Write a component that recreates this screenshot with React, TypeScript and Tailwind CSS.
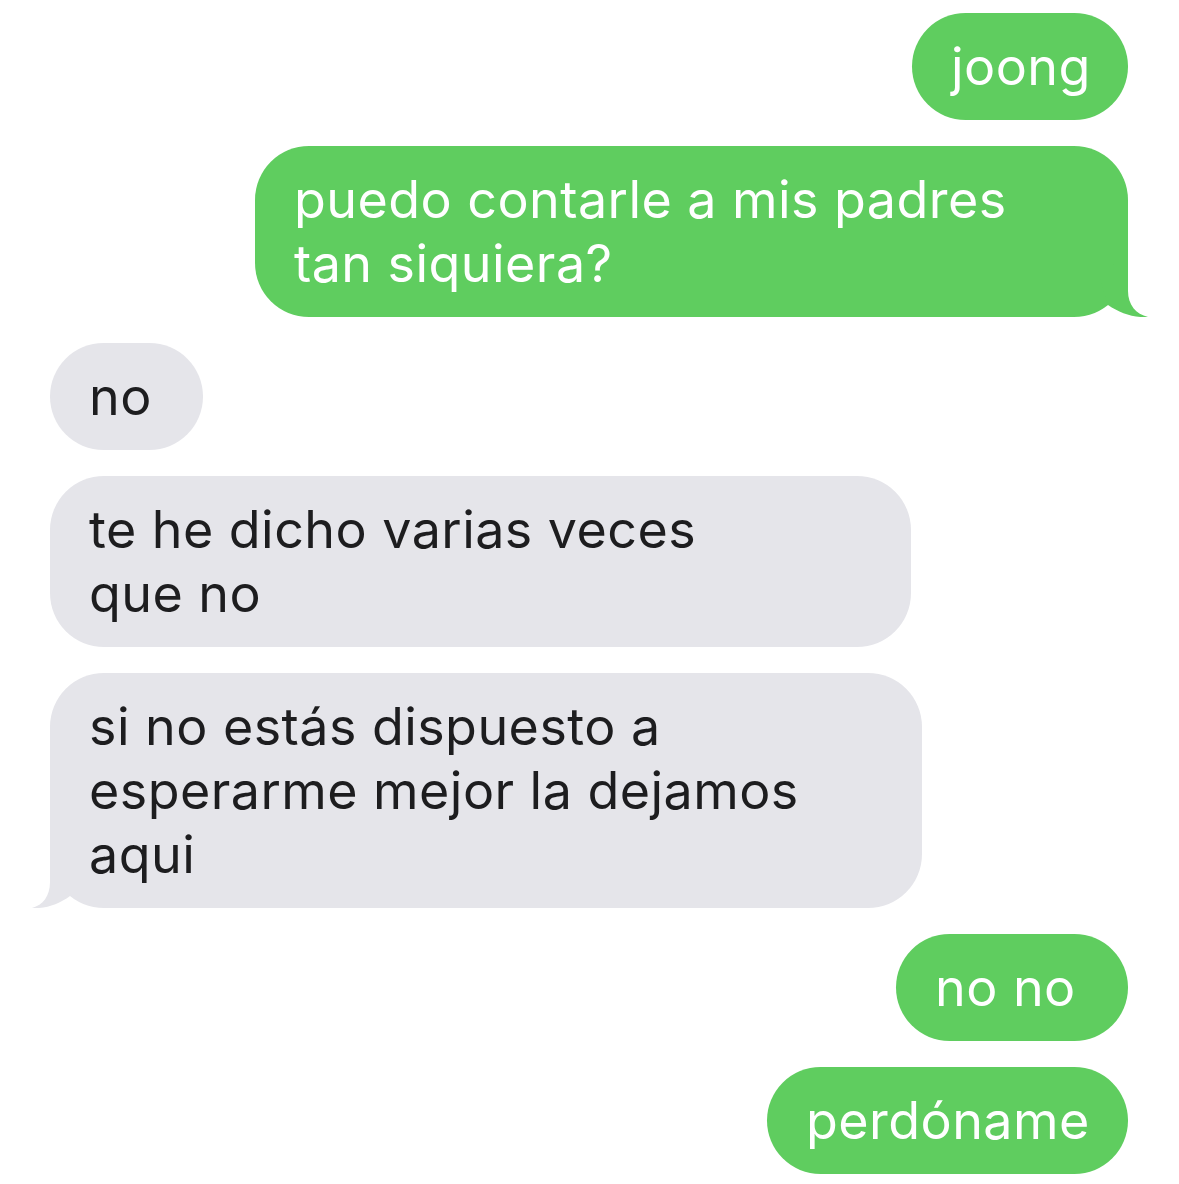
import React from 'react';

type Msg = {
  text: string[];
  mine: boolean;
  width: string;
  tail?: boolean;
};

const messages: Msg[] = [
  { text: ['joong'], mine: true, width: 'w-[216px]' },
  { text: ['puedo contarle a mis padres', 'tan siquiera?'], mine: true, width: 'w-[873px]', tail: true },
  { text: ['no'], mine: false, width: 'w-[153px]' },
  { text: ['te he dicho varias veces', 'que no'], mine: false, width: 'w-[861px]' },
  { text: ['si no estás dispuesto a', 'esperarme mejor la dejamos', 'aqui'], mine: false, width: 'w-[872px]', tail: true },
  { text: ['no no'], mine: true, width: 'w-[232px]' },
  { text: ['perdóname'], mine: true, width: 'w-[361px]' },
];

function Tail({ mine }: { mine: boolean }) {
  // little hook at the bottom corner of the last bubble in a group
  if (mine) {
    return (
      <svg
        className="absolute bottom-0 right-[-20px] w-[60px] h-[68px]"
        viewBox="0 0 60 68"
      >
        <path d="M40 0 L40 42 C40 56 48 65 60 68 C45 69 32 64 20 56 L12 30 Z" fill="#5fcd5f" />
      </svg>
    );
  }
  return (
    <svg className="absolute bottom-0 left-[-18px] w-[60px] h-[68px]" viewBox="0 0 60 68">
      <path d="M18 0 L18 42 C18 56 11 65 0 68 C14 69 27 64 38 56 L46 30 Z" fill="#e5e5ea" />
    </svg>
  );
}

function Bubble({ msg }: { msg: Msg }) {
  return (
    <div
      className={`relative ${msg.width} rounded-[54px] px-[39px] pt-[22px] pb-[21px] text-[52px] leading-[64px] tracking-[0.45px] ${
        msg.mine ? 'self-end bg-[#5fcd5f] text-white' : 'self-start bg-[#e5e5ea] text-[#1d1d1f]'
      }`}
    >
      {msg.tail && <Tail mine={msg.mine} />}
      <div className="relative whitespace-nowrap">
        {msg.text.map((line) => (
          <div key={line}>{line}</div>
        ))}
      </div>
    </div>
  );
}

export default function App() {
  return (
    <div
      className="w-[1179px] h-[1184px] overflow-hidden bg-white flex flex-col gap-[26px] pt-[13px] pl-[50px] pr-[51px]"
      style={{ fontFamily: 'Inter, "Noto Sans", sans-serif' }}
    >
      {messages.map((m, i) => (
        <Bubble key={i} msg={m} />
      ))}
    </div>
  );
}
